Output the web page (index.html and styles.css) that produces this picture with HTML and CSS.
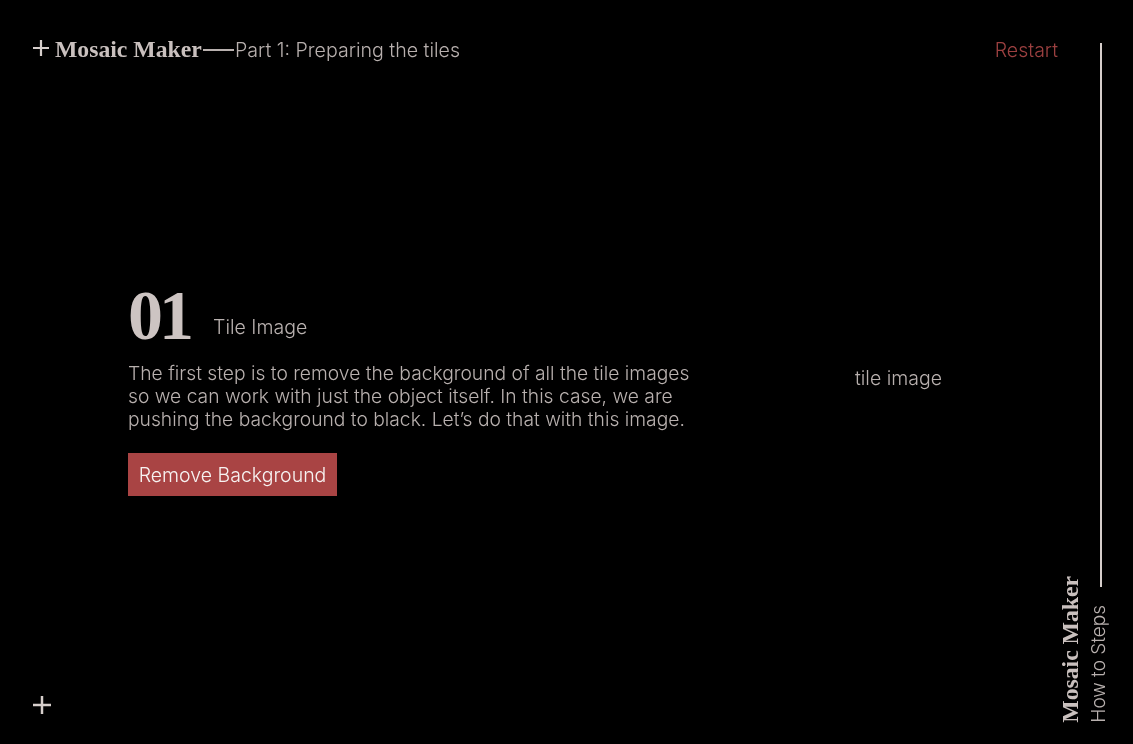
FILE: index.html
```html
<!DOCTYPE html>
<html lang="en">
<head>
<meta charset="utf-8">
<title>Mosaic Maker</title>
<link rel="stylesheet" href="styles.css">
</head>
<body>
<div class="page">
  <div class="content">
    <header class="top">
      <svg class="plus plus-top" viewBox="0 0 16 16" aria-hidden="true"><path d="M0 8H16M8 0V16"/></svg>
      <span class="brand">Mosaic Maker</span>
      <span class="dash"></span>
      <span class="part">Part 1: Preparing the tiles</span>
      <a class="restart">Restart</a>
    </header>
    <main class="stage">
      <section class="step">
        <div class="step-head">
          <span class="num">01</span>
          <h1 class="step-title">Tile Image</h1>
        </div>
        <p class="copy">The first step is to remove the background of all the tile images<br>so we can work with just the object itself. In this case, we are<br>pushing the background to black. Let’s do that with this image.</p>
        <button class="action">Remove Background</button>
      </section>
      <div class="tile">tile image</div>
    </main>
    <footer class="bottom">
      <svg class="plus plus-bottom" viewBox="0 0 16 16" aria-hidden="true"><path d="M0 8H16M8 0V16"/></svg>
    </footer>
  </div>
  <aside class="rail">
    <div class="rail-text">
      <span class="rail-brand">Mosaic Maker</span>
      <span class="rail-sub">How to Steps</span>
    </div>
    <div class="rail-line"></div>
  </aside>
</div>
</body>
</html>
```
FILE: styles.css
```css
* { box-sizing: border-box; }
html, body { margin: 0; height: 100%; background: #000; }
body { overflow: hidden; font-family: "Inter", "Liberation Sans", sans-serif; font-weight: 300; color: #cdc4c2; }
.page { display: flex; width: 1133px; height: 744px; will-change: transform; }
.content { flex: 1; display: flex; flex-direction: column; padding: 38px 0 0 33px; min-width: 0; }
.top { display: flex; align-items: center; height: 24px; }
.plus { fill: none; stroke: #d6cecb; stroke-width: 2.2; flex: none; display: block; }
.plus-top { width: 16px; height: 16px; margin-top: -4px; }
.plus-bottom { width: 18px; height: 18px; margin-top: -2px; stroke-width: 2.2; }
.brand { font-family: "Liberation Serif", serif; font-weight: 700; font-size: 23.7px; line-height: 24px; margin: -3px 0 0 6px; width: 148px; white-space: nowrap; color: #c9c0be; }
.dash { width: 31px; height: 2px; background: #b9b1af; }
.part { font-size: 19.6px; margin-left: 1px; color: #b8b0ae; white-space: nowrap; }
.restart { margin-left: auto; font-size: 19.5px; color: #9c4040; }
.stage { flex: 1; display: flex; align-items: flex-start; padding: 219px 0 0 95px; }
.step { width: 640px; }
.step-head { display: flex; align-items: flex-start; height: 70px; }
.num { font-family: "Liberation Serif", serif; font-weight: 700; font-size: 70px; line-height: 70px; letter-spacing: -4px; width: 85px; color: #cdc4c2; }
.step-title { margin: 35px 0 0; font-size: 19.5px; line-height: 22px; font-weight: 300; color: #bab2b0; }
.copy { margin: 11px 0 0; font-size: 19.25px; line-height: 23px; color: #b8b0ae; white-space: nowrap; }
.action { display: block; margin-top: 22px; width: 209px; height: 43px; padding: 0; border: 0; background: #a94444; color: #f7f3f2; font: inherit; font-size: 19.5px; }
.tile { margin: 85px 0 0 87px; font-size: 19.5px; color: #b8b0ae; }
.bottom { height: 46px; }
.rail { width: 75px; flex: none; position: relative; display: flex; padding: 43px 0 21px; }
.rail-text { writing-mode: vertical-rl; transform: rotate(180deg); align-self: flex-end; display: flex; flex-direction: column; }
.rail-brand { font-family: "Liberation Serif", serif; font-weight: 700; font-size: 23.7px; line-height: 24px; white-space: nowrap; color: #c9c0be; }
.rail-sub { font-size: 19px; line-height: 34px; color: #b8b0ae; white-space: nowrap; }
.rail-line { position: absolute; top: 43px; left: 42px; width: 2px; height: 544px; background: #d6cecb; }
```
